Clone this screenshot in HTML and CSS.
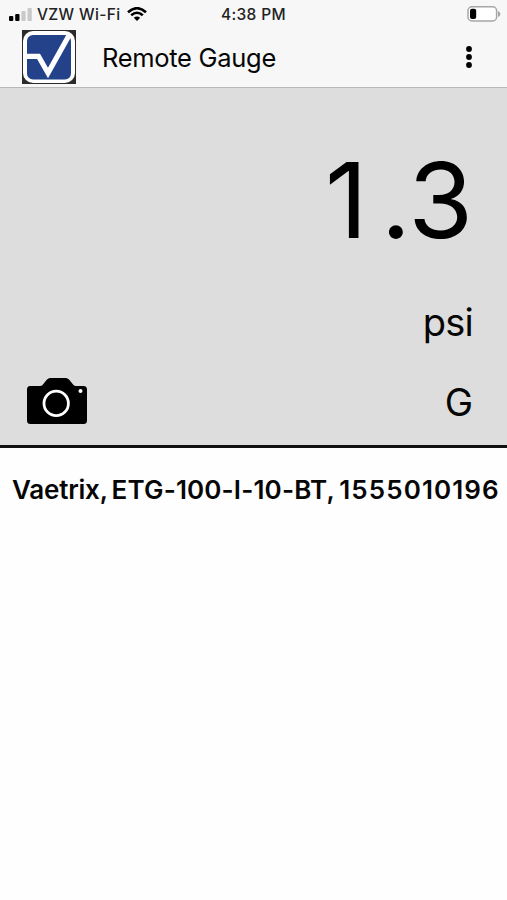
FILE: index.html
```html
<!DOCTYPE html>
<html lang="en">
<head>
    <meta charset="UTF-8">
    <meta name="viewport" content="width=device-width, initial-scale=1.0">
    <title>Remote Gauge</title>
    <link rel="stylesheet" href="styles.css">
</head>
<body>
    <header class="top">
        <div class="status-bar">
            <div class="carrier">
                <svg class="signal" width="23" height="13" viewBox="0 0 23 13">
                    <rect x="0" y="8" width="4.3" height="5" rx="1"/>
                    <rect x="6.2" y="6" width="4.3" height="7" rx="1"/>
                    <rect class="off" x="12.4" y="3" width="4.3" height="10" rx="1"/>
                    <rect class="off" x="18.5" y="0" width="4.3" height="13" rx="1"/>
                </svg>
                <span>VZW Wi-Fi</span>
                <svg class="wifi" width="20" height="14" viewBox="0 0 20 14">
                    <path d="M1 5.2 Q10 -2.8 19 5.2"/>
                    <path d="M4.2 8.3 Q10 3.2 15.8 8.3"/>
                    <path class="dot" d="M6.8 10.7 Q10 8.1 13.2 10.7 L10 14 Z"/>
                </svg>
            </div>
            <div class="clock">4:38 PM</div>
            <svg class="battery" width="34" height="16" viewBox="0 0 34 16">
                <rect class="shell" x="1" y="0.8" width="28.6" height="14.2" rx="4"/>
                <rect x="3" y="2.8" width="6.2" height="10.2" rx="2"/>
                <path class="tip" d="M31 5 Q33.4 6 33.4 8 Q33.4 10 31 11 Z"/>
            </svg>
        </div>
        <div class="title-bar">
            <svg class="logo" width="54" height="54" viewBox="0 0 54 54">
                <rect width="54" height="54" fill="#2b2b2b"/>
                <rect x="1" y="1" width="52" height="52" rx="10" fill="#fff"/>
                <rect x="5" y="5" width="44" height="44.5" rx="6" fill="#23428a"/>
                <path d="M4 26.3 H16.5 L26 43 L47.5 4.5" fill="none" stroke="#fff" stroke-width="5.2"/>
            </svg>
            <h1>Remote Gauge</h1>
            <svg class="menu" width="8" height="24" viewBox="0 0 8 24">
                <circle cx="4" cy="4" r="2.9"/>
                <circle cx="4" cy="12" r="2.9"/>
                <circle cx="4" cy="20" r="2.9"/>
            </svg>
        </div>
    </header>

    <main class="gauge">
        <div class="reading"><span class="whole">1</span>.3</div>
        <div class="unit">psi</div>
        <div class="gauge-footer">
            <svg class="camera" width="62" height="48" viewBox="0 0 62 48">
                <path d="M4 9 H14 Q15.5 9 16.5 8 L21 2.5 Q22.5 1 24 1 H40 Q41.5 1 43 2.5 L47.5 8 Q48.5 9 50 9 H57.5 Q61 9 61 12.5 V43.5 Q61 47 57.5 47 H4.5 Q1 47 1 43.5 V12.5 Q1 9 4 9 Z"/>
                <circle class="lens" cx="30.2" cy="26.4" r="12.2"/>
                <circle class="flash" cx="54.5" cy="14" r="2"/>
            </svg>
            <div class="mode">G</div>
        </div>
    </main>

    <p class="device">Vaetrix, <span class="model">ETG-100-I-10-BT,</span> <span class="serial">1555010196</span></p>
</body>
</html>
```
FILE: styles.css
```css
* {
    box-sizing: border-box;
}
body {
    margin: 0;
    background: #fefefe;
    color: #060606;
    font-family: Inter, "Liberation Sans", sans-serif;
}
.top {
    height: 88px;
    background: #f7f7f7;
    border-bottom: 1px solid #b9b9b9;
}
.status-bar {
    display: grid;
    grid-template-columns: 1fr auto 1fr;
    align-items: center;
    height: 28px;
    padding: 0 6px 0 9px;
    font-size: 15.5px;
    font-weight: 500;
    letter-spacing: 0.35px;
    color: #222;
}
.carrier {
    display: flex;
    align-items: center;
    gap: 5px;
    white-space: nowrap;
}
.signal .off {
    fill: #c9c9c9;
}
.wifi {
    margin-left: 2px;
    fill: none;
    stroke: #000;
    stroke-width: 2.6;
}
.wifi .dot {
    fill: #000;
    stroke: none;
}
.clock {
    margin-right: 3px;
}
.battery {
    justify-self: end;
}
.battery .shell {
    fill: #fff;
    stroke: #a6a6a6;
    stroke-width: 1.5;
}
.battery .tip {
    fill: #a6a6a6;
}
.title-bar {
    display: flex;
    align-items: center;
    height: 58px;
    padding: 0 34px 0 22px;
}
.title-bar h1 {
    margin: 2px 0 0 26px;
    font-size: 25.5px;
    font-weight: 400;
    line-height: 30px;
    letter-spacing: -0.3px;
}
.menu {
    margin-left: auto;
}
.gauge {
    height: 360px;
    padding: 49px 34px 0 26px;
    background: #ddd;
    border-bottom: 3px solid #111;
    text-align: right;
}
.reading {
    font-size: 105px;
    line-height: 126px;
    color: #000;
}
.reading .whole {
    letter-spacing: 13px;
}
.unit {
    margin-top: 36px;
    font-size: 38px;
    line-height: 46px;
    letter-spacing: -0.8px;
}
.gauge-footer {
    display: flex;
    justify-content: space-between;
    align-items: center;
    height: 48px;
    margin-top: 32px;
}
.camera .lens {
    fill: none;
    stroke: #fff;
    stroke-width: 2.8;
}
.camera .flash {
    fill: #fff;
}
.mode {
    padding-top: 2px;
    font-size: 38px;
    line-height: 46px;
}
.device {
    margin: 26px 0 0 12px;
    font-size: 26px;
    font-weight: 600;
    line-height: 32px;
    letter-spacing: -0.2px;
    word-spacing: -2px;
    white-space: nowrap;
}
.model {
    letter-spacing: 0.15px;
}
.serial {
    letter-spacing: 1.1px;
}
```
